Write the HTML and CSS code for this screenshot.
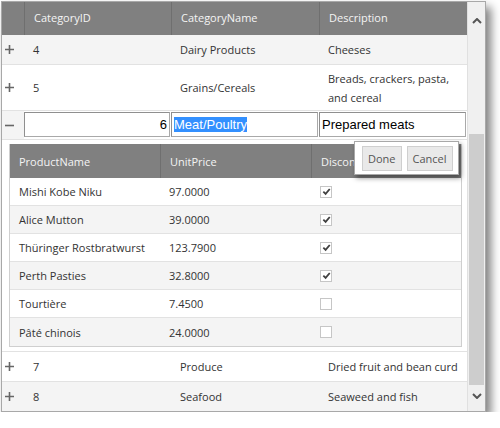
FILE: index.html
```html
<!DOCTYPE html>
<html>
<head>
<meta charset="utf-8">
<link rel="stylesheet" href="styles.css">
</head>
<body>
<div class="grid">
  <div class="main">
    <div class="row head">
      <div class="cell exp"></div>
      <div class="cell">CategoryID</div>
      <div class="cell">CategoryName</div>
      <div class="cell">Description</div>
    </div>
    <div class="row alt">
      <div class="cell exp"><svg class="pm" viewBox="0 0 9 9"><path d="M0 4.5H9M4.5 0V9"/></svg></div>
      <div class="cell">4</div>
      <div class="cell">Dairy Products</div>
      <div class="cell">Cheeses</div>
    </div>
    <div class="row tall">
      <div class="cell exp"><svg class="pm" viewBox="0 0 9 9"><path d="M0 4.5H9M4.5 0V9"/></svg></div>
      <div class="cell">5</div>
      <div class="cell">Grains/Cereals</div>
      <div class="cell">Breads, crackers, pasta, and cereal</div>
    </div>
    <div class="row edit">
      <div class="cell exp alt"><svg class="pm" viewBox="0 0 9 9"><path d="M0 4.5H9"/></svg></div>
      <div class="inp num">6</div>
      <div class="inp"><span class="sel">Meat/Poultry</span></div>
      <div class="inp">Prepared meats</div>
    </div>
    <div class="detail">
      <div class="inner">
        <div class="irow ihead">
          <div class="icell">ProductName</div>
          <div class="icell">UnitPrice</div>
          <div class="icell">Discontinued</div>
        </div>
        <div class="irow">
          <div class="icell">Mishi Kobe Niku</div>
          <div class="icell">97.0000</div>
          <div class="icell"><span class="cb on"></span></div>
        </div>
        <div class="irow alt">
          <div class="icell">Alice Mutton</div>
          <div class="icell">39.0000</div>
          <div class="icell"><span class="cb on"></span></div>
        </div>
        <div class="irow">
          <div class="icell">Thüringer Rostbratwurst</div>
          <div class="icell">123.7900</div>
          <div class="icell"><span class="cb on"></span></div>
        </div>
        <div class="irow alt">
          <div class="icell">Perth Pasties</div>
          <div class="icell">32.8000</div>
          <div class="icell"><span class="cb on"></span></div>
        </div>
        <div class="irow">
          <div class="icell">Tourtière</div>
          <div class="icell">7.4500</div>
          <div class="icell"><span class="cb"></span></div>
        </div>
        <div class="irow alt last">
          <div class="icell">Pâté chinois</div>
          <div class="icell">24.0000</div>
          <div class="icell"><span class="cb"></span></div>
        </div>
      </div>
      <div class="popup">
        <button class="btn">Done</button>
        <button class="btn">Cancel</button>
      </div>
    </div>
    <div class="row">
      <div class="cell exp"><svg class="pm" viewBox="0 0 9 9"><path d="M0 4.5H9M4.5 0V9"/></svg></div>
      <div class="cell">7</div>
      <div class="cell">Produce</div>
      <div class="cell">Dried fruit and bean curd</div>
    </div>
    <div class="row alt">
      <div class="cell exp"><svg class="pm" viewBox="0 0 9 9"><path d="M0 4.5H9M4.5 0V9"/></svg></div>
      <div class="cell">8</div>
      <div class="cell">Seafood</div>
      <div class="cell">Seaweed and fish</div>
    </div>
  </div>
  <div class="sb">
    <svg class="arr" viewBox="0 0 10 6"><path d="M1 5L5 1L9 5"/></svg>
    <div class="track"><div class="thumb"></div></div>
    <svg class="arr" viewBox="0 0 10 6"><path d="M1 1L5 5L9 1"/></svg>
  </div>
</div>
</body>
</html>
```
FILE: styles.css
```css
* { box-sizing: border-box; }
body {
  margin: 0;
  background: #fff;
  font-family: "Open Sans", "Noto Sans", sans-serif;
  font-size: 11px;
  color: #333;
}
.grid {
  margin: 1px 0 0 1px;
  width: 485px;
  height: 411px;
  border: 1px solid #a8a8a8;
  display: flex;
  overflow: hidden;
  box-shadow: 5px 6px 9px rgba(0,0,0,0.5);
  background: #fff;
}
.main {
  width: 465px;
  flex: none;
  display: flex;
  flex-direction: column;
  overflow: hidden;
}
.row {
  display: grid;
  grid-template-columns: 22px 147px 148px 148px;
  height: 30px;
  border-bottom: 1px solid #e2e2e2;
  flex: none;
}
.row.alt, .cell.alt { background: #f4f4f4; }
.row.head {
  height: 33px;
  background: #808080;
  color: #f4f4f4;
  border-bottom: none;
}
.row.head .cell { border-left: 1px solid #6f6f6f; padding-bottom: 2px; }
.row.head .cell.exp { border-left: none; }
.row.tall { height: 46px; }
.cell {
  display: flex;
  align-items: center;
  padding: 0 9px;
  line-height: 19px;
}
.cell.exp { padding: 0 0 0 3px; }
.pm { width: 9px; height: 9px; stroke: #666; stroke-width: 1.6; fill: none; }
.row.edit {
  height: 29px;
  align-items: start;
}
.row.edit .cell.exp { height: 28px; }
.inp {
  margin-top: 1px;
  height: 25px;
  border: 1px solid #a9a9a9;
  border-top-color: #8f8f8f;
  border-left-color: #8f8f8f;
  font-family: "Liberation Sans", Arial, sans-serif;
  font-size: 13px;
  color: #000;
  display: flex;
  align-items: center;
  padding: 0 2px;
  margin-right: 1px;
}
.inp.num { justify-content: flex-end; }
.sel { background: #3390ff; color: #fff; }
.detail {
  position: relative;
  height: 212px;
  flex: none;
  padding: 4px 5px 0 7px;
  border-bottom: 1px solid #e2e2e2;
}
.inner {
  border: 1px solid #cfcfcf;
  border-top: none;
}
.irow {
  display: grid;
  grid-template-columns: 150px 151px 151px;
  height: 28px;
  border-bottom: 1px solid #e2e2e2;
}
.irow.last { border-bottom: none; }
.irow.alt { background: #f4f4f4; }
.irow.ihead {
  height: 34px;
  background: #808080;
  color: #f4f4f4;
  border-bottom: none;
}
.irow.ihead .icell + .icell { border-left: 1px solid #6f6f6f; }
.icell {
  display: flex;
  align-items: center;
  padding: 0 9px;
}
.cb {
  width: 12px;
  height: 12px;
  border: 1px solid #c6c6c6;
  background: #fff;
  display: inline-block;
}
.cb.on {
  background: #fff url("data:image/svg+xml;utf8,<svg xmlns='http://www.w3.org/2000/svg' viewBox='0 0 10 10'><path d='M1.5 5.2L4 7.6L8.6 2.2' stroke='%23404040' stroke-width='2' fill='none'/></svg>") center/9px 9px no-repeat;
}
.popup {
  position: absolute;
  left: 352px;
  top: 1px;
  width: 105px;
  height: 34px;
  background: #fff;
  border: 1px solid #a8a8a8;
  box-shadow: 2px 3px 5px rgba(0,0,0,0.45);
  display: flex;
  align-items: center;
  gap: 5px;
  padding: 0 0 0 7px;
}
.btn {
  font-family: "Open Sans", "Noto Sans", sans-serif;
  font-size: 11px;
  color: #555;
  background: #e9e9e9;
  border: 1px solid #cfcfcf;
  height: 25px;
  padding: 0 5px;
  margin: 0;
}
.sb {
  width: 18px;
  flex: none;
  background: #f0f0f0;
  border-left: 1px solid #e0e0e0;
  display: flex;
  flex-direction: column;
  align-items: center;
  padding-top: 16px;
  padding-bottom: 12px;
}
.arr { width: 10px; height: 6px; stroke: #555; stroke-width: 2; fill: none; flex: none; }
.track {
  flex: 1;
  width: 100%;
  display: flex;
  flex-direction: column;
  justify-content: flex-end;
  padding: 0 1px 8px 1px;
}
.thumb {
  height: 251px;
  background: #cdcdcd;
}
```
